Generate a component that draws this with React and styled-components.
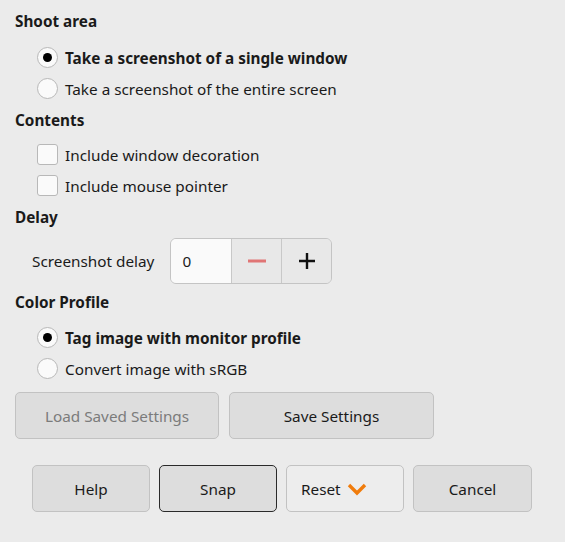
import React from 'react';
import styled, { createGlobalStyle } from 'styled-components';

const Global = createGlobalStyle`
  html, body { margin: 0; padding: 0; background: #ebebeb; }
  body { font-family: "Noto Sans", "Open Sans", sans-serif; font-size: 15.3px; color: #1a1a1a; }
`;

const Dialog = styled.div`
  width: 565px;
  height: 542px;
  box-sizing: border-box;
  padding: 10px 15px 0 15px;
  display: flex;
  flex-direction: column;
`;

const Heading = styled.div`
  font-weight: bold;
  height: 22px;
  line-height: 22px;
  margin: ${(p) => (p.$first ? 0 : 5)}px 0 ${(p) => p.$after || 10}px;
`;

const Option = styled.label`
  display: flex;
  align-items: center;
  gap: 7px;
  height: 31px;
  padding-left: 22px;
  font-weight: ${(p) => (p.$bold ? 'bold' : 'normal')};
`;

const Radio = styled.span`
  width: 19px;
  height: 19px;
  border-radius: 50%;
  border: 1px solid #b8b8b8;
  background: #fafafa;
  display: flex;
  align-items: center;
  justify-content: center;
  &::after {
    content: '';
    width: 9px;
    height: 9px;
    border-radius: 50%;
    background: #000;
    display: ${(p) => (p.$on ? 'block' : 'none')};
  }
`;

const Check = styled.span`
  width: 19px;
  height: 19px;
  border-radius: 3px;
  border: 1px solid #b8b8b8;
  background: #fafafa;
`;

const DelayRow = styled.div`
  display: flex;
  align-items: center;
  gap: 16px;
  padding-left: 17px;
  height: 46px;
  margin-bottom: 2px;
`;

const Spin = styled.div`
  display: flex;
  height: 44px;
  border: 1px solid #c4c4c4;
  border-radius: 6px;
  overflow: hidden;
`;

const SpinEntry = styled.div`
  width: 49px;
  background: #fafafa;
  padding-left: 11px;
  display: flex;
  align-items: center;
  border-right: 1px solid #c8c8c8;
`;

const SpinButton = styled.div`
  width: 49px;
  background: #e8e8e8;
  display: flex;
  align-items: center;
  justify-content: center;
  & + & { border-left: 1px solid #c8c8c8; }
`;

const Row = styled.div`
  display: flex;
  gap: ${(p) => p.$gap}px;
  padding-left: ${(p) => p.$pad || 0}px;
  margin-top: ${(p) => p.$top}px;
`;

const Button = styled.div`
  width: ${(p) => p.$w}px;
  height: 45px;
  box-sizing: content-box;
  border: 1px solid ${(p) => (p.$focus ? '#2a2a2a' : '#c2c2c2')};
  border-radius: 5px;
  background: ${(p) => (p.$light ? '#ededed' : '#dddddd')};
  color: ${(p) => (p.$disabled ? '#7b7b7b' : '#1a1a1a')};
  display: flex;
  align-items: center;
  justify-content: ${(p) => (p.$start ? 'flex-start' : 'center')};
  padding-left: ${(p) => (p.$start ? 14 : 0)}px;
  gap: 6px;
`;

const Minus = () => (
  <svg width="20" height="20" viewBox="0 0 20 20">
    <path d="M1 10h18" stroke="#e07575" strokeWidth="3" />
  </svg>
);

const Plus = () => (
  <svg width="20" height="20" viewBox="0 0 20 20">
    <path d="M2 10h16M10 2v16" stroke="#111" strokeWidth="2.4" />
  </svg>
);

const Chevron = () => (
  <svg width="20" height="14" viewBox="0 0 20 14">
    <path d="M2 3l8 8 8-8" fill="none" stroke="#f07c0c" strokeWidth="3.4" />
  </svg>
);

const App = () => (
  <Dialog>
    <Global />
    <Heading $first>Shoot area</Heading>
    <Option $bold><Radio $on />Take a screenshot of a single window</Option>
    <Option><Radio />Take a screenshot of the entire screen</Option>
    <Heading $after={8}>Contents</Heading>
    <Option><Check />Include window decoration</Option>
    <Option><Check />Include mouse pointer</Option>
    <Heading>Delay</Heading>
    <DelayRow>
      Screenshot delay
      <Spin>
        <SpinEntry>0</SpinEntry>
        <SpinButton><Minus /></SpinButton>
        <SpinButton><Plus /></SpinButton>
      </Spin>
    </DelayRow>
    <Heading $after={9}>Color Profile</Heading>
    <Option $bold><Radio $on />Tag image with monitor profile</Option>
    <Option><Radio />Convert image with sRGB</Option>
    <Row $gap={10} $top={8}>
      <Button $w={202} $disabled>Load Saved Settings</Button>
      <Button $w={203}>Save Settings</Button>
    </Row>
    <Row $gap={9} $pad={17} $top={26}>
      <Button $w={116}>Help</Button>
      <Button $w={116} $focus>Snap</Button>
      <Button $w={102} $light $start>Reset <Chevron /></Button>
      <Button $w={117}>Cancel</Button>
    </Row>
  </Dialog>
);

export default App;
